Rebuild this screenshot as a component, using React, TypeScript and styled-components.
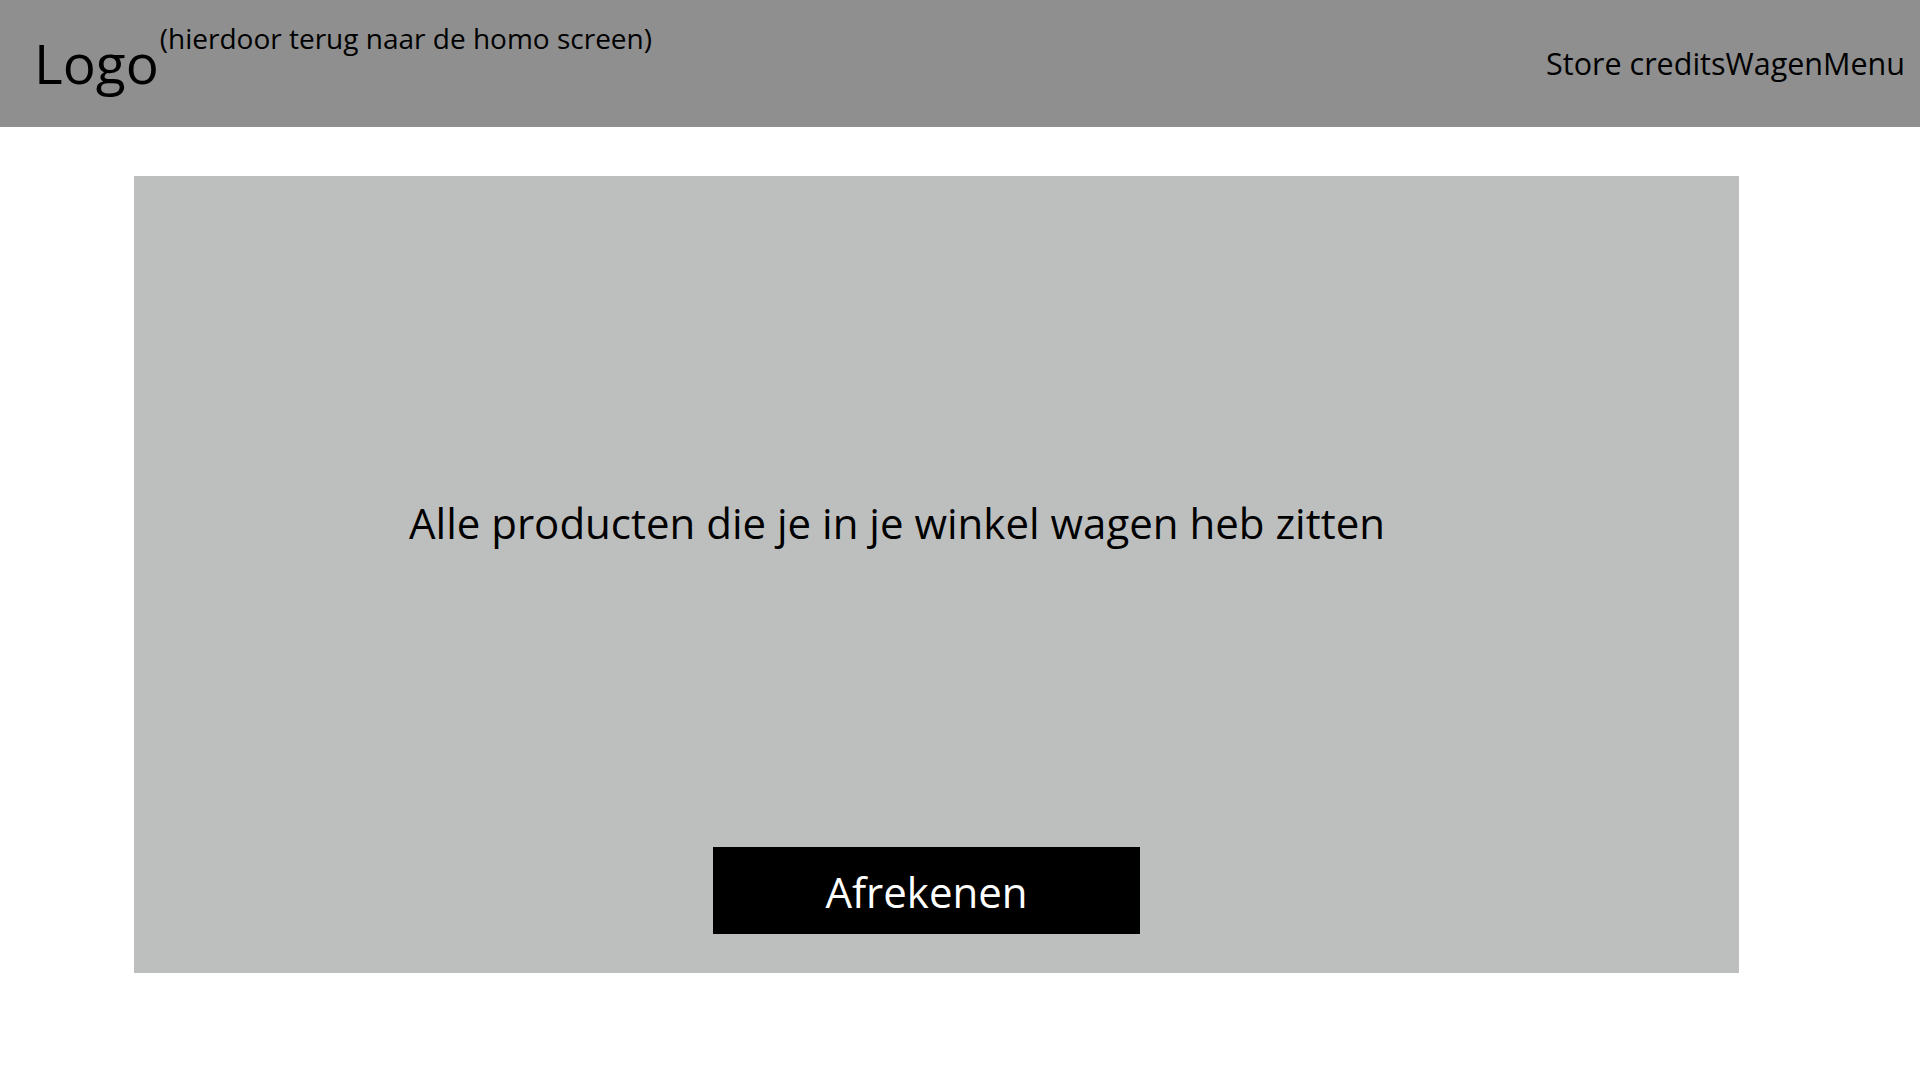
import React from "react";
import styled, { createGlobalStyle } from "styled-components";

const GlobalStyle = createGlobalStyle`
  html, body {
    margin: 0;
    padding: 0;
    background: #ffffff;
    font-family: "Open Sans", Lato, sans-serif;
    color: #000000;
  }
`;

const Page = styled.div`
  width: 1920px;
  min-height: 1080px;
  display: flex;
  flex-direction: column;
`;

const Header = styled.header`
  height: 127px;
  background: #8e8f8e;
  display: flex;
  align-items: flex-start;
  padding: 0 15px 0 34px;
  box-sizing: border-box;
`;

const Logo = styled.div`
  font-size: 55px;
  line-height: 1;
  margin-top: 35px;
`;

const LogoNote = styled.div`
  font-size: 28px;
  line-height: 1;
  margin-top: 24px;
  margin-left: 1px;
`;

const Nav = styled.nav`
  margin-left: auto;
  margin-top: 48px;
  display: flex;
`;

const NavItem = styled.span`
  font-size: 30.5px;
  line-height: 1;
`;

const Panel = styled.main`
  margin: 49px 0 0 134px;
  width: 1605px;
  height: 797px;
  background: #bdbfbe;
  display: flex;
  flex-direction: column;
  align-items: flex-start;
  box-sizing: border-box;
  padding: 326px 0 39px 275px;
`;

const Message = styled.p`
  margin: 0;
  font-size: 42px;
  line-height: 1;
`;

const CheckoutButton = styled.button`
  margin-top: auto;
  margin-left: 304px;
  width: 427px;
  height: 87px;
  border: none;
  background: #000000;
  color: #ffffff;
  font-family: "Open Sans", Lato, sans-serif;
  font-size: 42px;
  line-height: 1;
  display: flex;
  align-items: center;
  justify-content: center;
  padding: 2px 0 0 0;
  box-sizing: border-box;
  cursor: pointer;
`;

export default function App() {
  return (
    <>
      <GlobalStyle />
      <Page>
        <Header>
          <Logo>Logo</Logo>
          <LogoNote>(hierdoor terug naar de homo screen)</LogoNote>
          <Nav>
            <NavItem>Store credits</NavItem>
            <NavItem>Wagen</NavItem>
            <NavItem>Menu</NavItem>
          </Nav>
        </Header>
        <Panel>
          <Message>Alle producten die je in je winkel wagen heb zitten</Message>
          <CheckoutButton>Afrekenen</CheckoutButton>
        </Panel>
      </Page>
    </>
  );
}
